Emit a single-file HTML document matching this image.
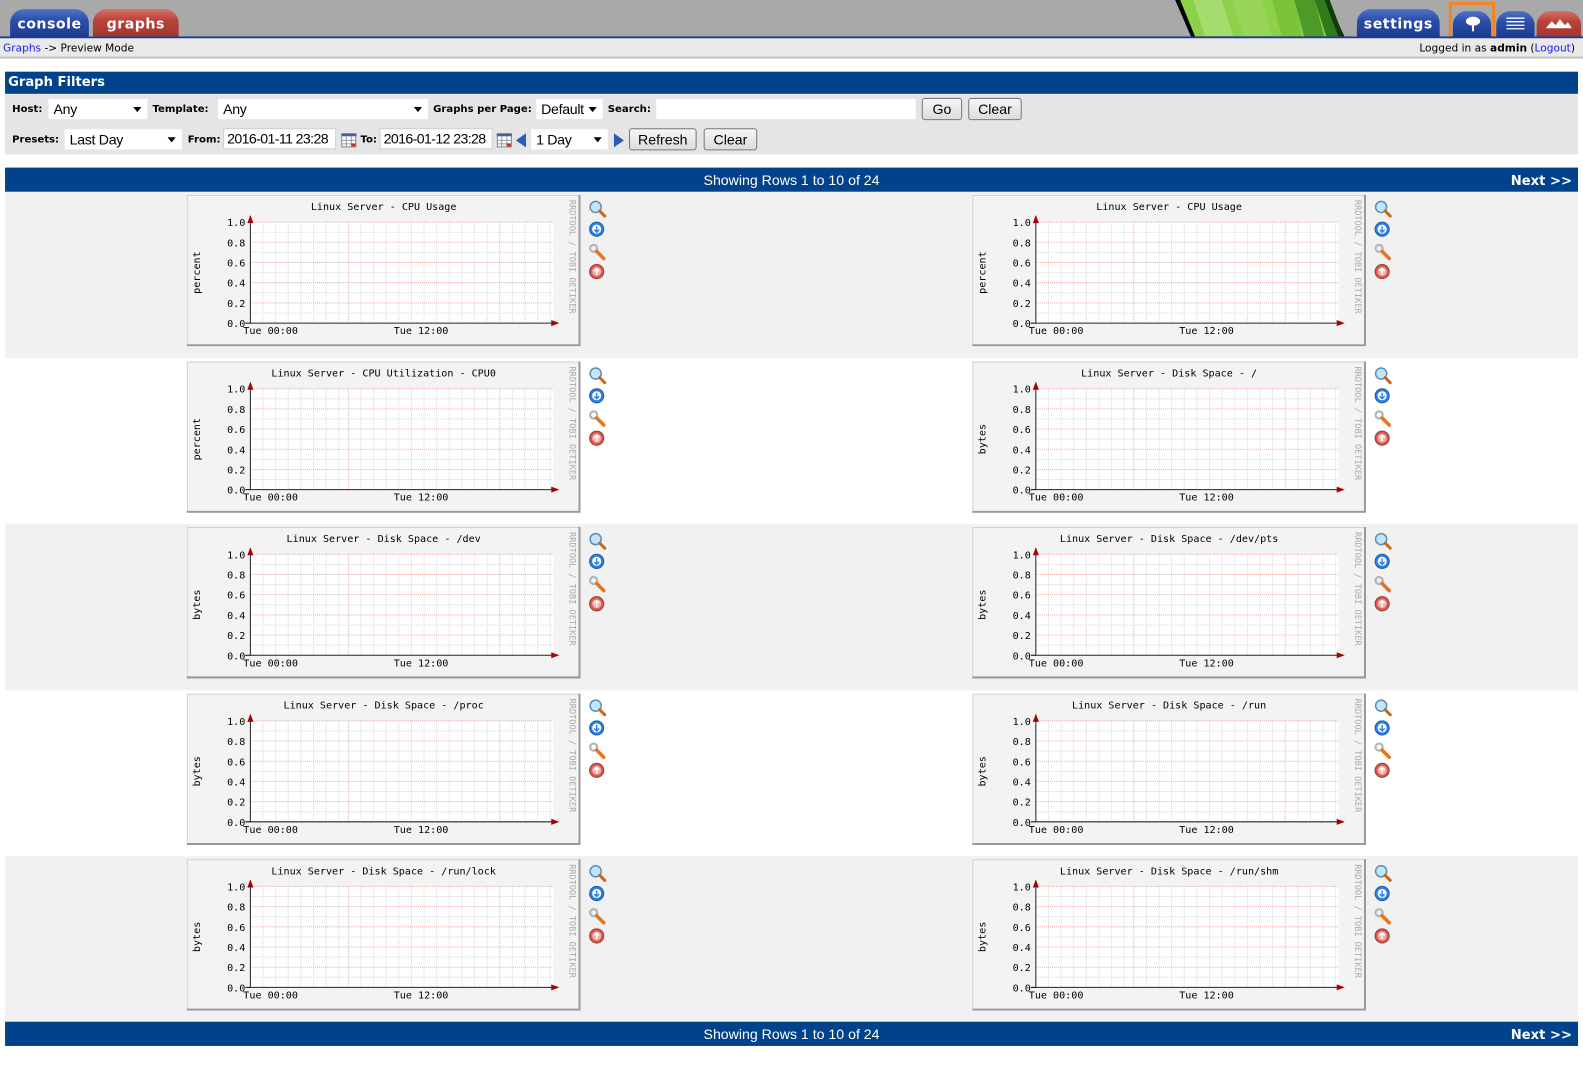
<!DOCTYPE html>
<html><head><meta charset="utf-8">
<style>
*{margin:0;padding:0;box-sizing:border-box}
html,body{width:1583px;height:1065px;overflow:hidden;background:#fff}
#w{position:absolute;left:0;top:0;width:1568px;height:1055px;transform:scale(1.0096);transform-origin:0 0;font-family:"DejaVu Sans",Verdana,sans-serif;font-size:11px;color:#000}
.a{position:absolute;white-space:nowrap}
.tab{position:absolute;top:9px;height:28px;border-radius:14px 14px 0 0;color:#fff;font-weight:bold;font-size:14px;text-align:center;line-height:30px;letter-spacing:0.5px}
.blue{background:linear-gradient(#4f73c8,#2a4ea8 40%,#1d3b8f)}
.red{background:linear-gradient(#d86f66,#b8433a 40%,#a3362e)}
.lbl{position:absolute;font-weight:bold;font-size:10px;white-space:nowrap}
.sel{position:absolute;background:#fff;height:20px;font-family:"Liberation Sans",Arial,sans-serif;font-size:14px;line-height:20px;padding-left:5px;white-space:nowrap;letter-spacing:-0.3px}
.sel:after{content:"";position:absolute;right:6px;top:8px;border-left:4px solid transparent;border-right:4px solid transparent;border-top:5px solid #000}
.inp{position:absolute;background:#fff;height:21px;border:1px solid #ccc;font-family:"Liberation Sans",Arial,sans-serif;font-size:14px;line-height:19px;padding-left:3px;white-space:nowrap;overflow:hidden;letter-spacing:-0.6px}
.btn{position:absolute;height:22px;border:1px solid #777;border-radius:3px;background:linear-gradient(#f6f6f6,#dcdcdc);font-family:"Liberation Sans",Arial,sans-serif;font-size:14px;line-height:20px;text-align:center}
.bar{position:absolute;left:5px;width:1558px;height:24px;background:#00438c;color:#fff;font-family:"Liberation Sans",Arial,sans-serif;font-size:14px;line-height:24px;text-align:center}
.bar b{position:absolute;right:6px;top:2px;line-height:24px;font-family:"DejaVu Sans",sans-serif;font-size:13px}
.row{position:absolute;left:5px;width:1558px;height:165px}
.g{position:absolute;width:390px;height:150px}
.ic{position:absolute;width:18px;height:84px}
svg text{font-family:"DejaVu Sans Mono","Liberation Mono",monospace}
</style></head><body><div id="w">
<svg width="0" height="0" style="position:absolute">
<defs>
<g id="grid">
<rect x="0" y="0" width="390" height="150" fill="#f3f3f3"/>
<path d="M0.5 149.5V0.5H389.5" stroke="#d0d0d0" fill="none"/>
<path d="M389 0V149H0" stroke="#999" stroke-width="2" fill="none"/>
<rect x="63" y="27" width="300" height="100" fill="#fff"/>
<g stroke="#d8d8d8" stroke-dasharray="1,1">
<path d="M63 37H363M63 57H363M63 77H363M63 97H363M63 117H363"/>
<path d="M75.5 27V127M88 27V127M100.5 27V127M113 27V127M125.5 27V127M138 27V127M150.5 27V127M172.5 27V127M185 27V127M197.5 27V127M210 27V127M222.5 27V127M235 27V127M247.5 27V127M260 27V127M272.5 27V127M285 27V127M297.5 27V127M322.5 27V127M335 27V127M347.5 27V127M360 27V127"/>
</g>
<g stroke="#eeaaaa" stroke-dasharray="1,1">
<path d="M63 27H363M63 47H363M63 67H363M63 87H363M63 107H363"/>
<path d="M160 27V127M310 27V127"/>
</g>
<path d="M63 21V127H366" stroke="#222" fill="none"/>
<path d="M60 28L63 20L66 28Z" fill="#a00"/>
<path d="M361 124L369 127L361 130Z" fill="#a00"/>
<g font-size="10" fill="#000" text-anchor="end">
<text x="58" y="31">1.0</text><text x="58" y="51">0.8</text><text x="58" y="71">0.6</text><text x="58" y="91">0.4</text><text x="58" y="111">0.2</text><text x="58" y="131">0.0</text>
</g>
<path d="M58 127H63" stroke="#000"/>
<g font-size="10" fill="#000"><text x="56" y="138">Tue 00:00</text><text x="205" y="138">Tue 12:00</text></g>
<text transform="translate(379,5) rotate(90)" font-size="8.5" fill="#aaa">RRDTOOL / TOBI OETIKER</text>
</g>
<g id="icons">
<circle cx="7" cy="7" r="5.5" fill="#bfe6ff" stroke="#5f8db5" stroke-width="1.5"/>
<path d="M11 11L16 16" stroke="#c8681e" stroke-width="3" stroke-linecap="round"/>
<circle cx="8" cy="29" r="7" fill="#2d7fe0" stroke="#1c5cb0"/>
<circle cx="8" cy="29" r="4.5" fill="#fff"/>
<path d="M8 26V32M5.5 29.5L8 32L10.5 29.5" stroke="#2d7fe0" stroke-width="1.4" fill="none"/>
<circle cx="5" cy="48" r="3.5" fill="none" stroke="#b5b5b5" stroke-width="2.2"/>
<path d="M8 51L15 58" stroke="#e8741e" stroke-width="3.5" stroke-linecap="round"/>
<circle cx="8" cy="71" r="7" fill="#d85a52" stroke="#a03a34"/>
<circle cx="8" cy="71" r="4.5" fill="#f3b0aa"/>
<path d="M8 74V68M5.5 70.5L8 68L10.5 70.5" stroke="#fff" stroke-width="1.4" fill="none"/>
</g>
</defs></svg>

<div class="a" style="left:0;top:0;width:1568px;height:36px;background:#a9a9a9"></div>
<svg class="a" style="left:1160px;top:0" width="180" height="37">
<polygon points="4,0 155,0 172,37 20,37" fill="#000"/>
<polygon points="9,0 152,0 166,37 24,37" fill="#8ed04a"/>
<polygon points="22,0 50,0 62,37 34,37" fill="#a6dc6e"/>
<polygon points="60,0 90,0 100,37 72,37" fill="#98d458"/>
<polygon points="100,0 122,0 130,37 110,37" fill="#7cc23a"/>
<polygon points="122,0 142,0 152,37 132,37" fill="#4c9a28"/>
<polygon points="142,0 152,0 166,37 154,37" fill="#2f7a1a"/>
<polygon points="152,0 157,0 171,37 166,37" fill="#0e3d08"/>
</svg>
<div class="tab blue" style="left:10px;width:78px">console</div>
<div class="tab red" style="left:92px;width:85px">graphs</div>
<div class="tab blue" style="left:1344px;width:82px">settings</div>
<div class="a" style="left:1435px;top:2px;width:46px;height:40px;border:3px solid #f7831e"></div>
<div class="tab blue" style="left:1439px;width:38px;top:11px;height:26px"></div>
<svg class="a" style="left:1450px;top:15px" width="18" height="18"><ellipse cx="9" cy="6" rx="7" ry="4.5" fill="#fff"/><rect x="8" y="9" width="2" height="7" fill="#fff"/></svg>
<div class="tab blue" style="left:1482px;width:38px;top:11px;height:26px"></div>
<svg class="a" style="left:1492px;top:17px" width="18" height="14"><path d="M0 1H18M0 4.5H18M0 8H18M0 11.5H18" stroke="#fff" stroke-width="1.3"/></svg>
<div class="tab red" style="left:1522px;width:44px;top:11px;height:26px"></div>
<svg class="a" style="left:1531px;top:18px" width="26" height="12"><path d="M0 10L6 3L10 7L14 1L19 7L22 4L26 10Z" fill="#fff"/></svg>
<div class="a" style="left:0;top:36px;width:1568px;height:2px;background:#1d3d8f"></div>
<div class="a" style="left:0;top:38px;width:1568px;height:20px;background:#e9e9e9;border-bottom:2px solid #c4c4c4"></div>
<div class="a" style="left:3px;top:42px;font-size:10.5px"><span style="color:#1a1aff">Graphs</span> -&gt; Preview Mode</div>
<div class="a" style="right:8px;top:42px;font-size:10.5px">Logged in as <b>admin</b> (<span style="color:#1a1aff">Logout</span>)</div>

<div class="a" style="left:5px;top:71px;width:1558px;height:22px;background:#00438c;color:#fff;font-weight:bold;font-size:13px;line-height:22px;padding-left:3px">Graph Filters</div>
<div class="a" style="left:5px;top:93px;width:1558px;height:60px;background:#e5e5e5"></div>
<div class="lbl" style="left:12px;top:103px">Host:</div>
<div class="sel" style="left:48px;top:98px;width:98px">Any</div>
<div class="lbl" style="left:151px;top:103px">Template:</div>
<div class="sel" style="left:216px;top:98px;width:208px">Any</div>
<div class="lbl" style="left:429px;top:103px">Graphs per Page:</div>
<div class="sel" style="left:531px;top:98px;width:66px">Default</div>
<div class="lbl" style="left:602px;top:103px">Search:</div>
<div class="a" style="left:650px;top:98px;width:257px;height:20px;background:#fff"></div>
<div class="btn" style="left:913px;top:97px;width:40px">Go</div>
<div class="btn" style="left:959px;top:97px;width:53px">Clear</div>

<div class="lbl" style="left:12px;top:133px">Presets:</div>
<div class="sel" style="left:64px;top:128px;width:116px">Last Day</div>
<div class="lbl" style="left:186px;top:133px">From:</div>
<div class="inp" style="left:221px;top:127px;width:112px">2016-01-11 23:28</div>
<svg class="a" style="left:338px;top:132px" width="15" height="14"><rect x="0.5" y="0.5" width="14" height="13" fill="#fff" stroke="#777"/><rect x="0" y="0" width="15" height="3" fill="#4a5fa0"/><path d="M5 3V14M10 3V14M0 7H15M0 10.5H15" stroke="#999"/><rect x="10" y="10" width="4" height="3" fill="#c03030"/></svg>
<div class="lbl" style="left:357px;top:133px">To:</div>
<div class="inp" style="left:376px;top:127px;width:112px">2016-01-12 23:28</div>
<svg class="a" style="left:492px;top:132px" width="15" height="14"><rect x="0.5" y="0.5" width="14" height="13" fill="#fff" stroke="#777"/><rect x="0" y="0" width="15" height="3" fill="#4a5fa0"/><path d="M5 3V14M10 3V14M0 7H15M0 10.5H15" stroke="#999"/><rect x="10" y="10" width="4" height="3" fill="#c03030"/></svg>
<svg class="a" style="left:511px;top:132px" width="10" height="14"><path d="M10 0V14L0 7Z" fill="#2a5cb8"/></svg>
<div class="sel" style="left:526px;top:128px;width:76px">1 Day</div>
<svg class="a" style="left:608px;top:132px" width="10" height="14"><path d="M0 0V14L10 7Z" fill="#2a5cb8"/></svg>
<div class="btn" style="left:623px;top:127px;width:67px">Refresh</div>
<div class="btn" style="left:697px;top:127px;width:53px">Clear</div>

<div class="bar" style="top:166px">Showing Rows 1 to 10 of 24<b>Next &gt;&gt;</b></div>

<div class="row" style="top:190px;background:#f1f1f1"></div>
<div class="row" style="top:354.5px;background:#fff"></div>
<div class="row" style="top:519px;background:#f1f1f1"></div>
<div class="row" style="top:683.5px;background:#fff"></div>
<div class="row" style="top:848px;background:#f1f1f1"></div>

<svg class="g" style="left:185px;top:193px"><use href="#grid"/><text x="195" y="15" font-size="10" text-anchor="middle">Linux Server - CPU Usage</text><text transform="translate(13,77) rotate(-90)" font-size="10" text-anchor="middle">percent</text></svg>
<svg class="ic" style="left:583px;top:198px"><use href="#icons"/></svg>
<svg class="g" style="left:963px;top:193px"><use href="#grid"/><text x="195" y="15" font-size="10" text-anchor="middle">Linux Server - CPU Usage</text><text transform="translate(13,77) rotate(-90)" font-size="10" text-anchor="middle">percent</text></svg>
<svg class="ic" style="left:1361px;top:198px"><use href="#icons"/></svg>
<svg class="g" style="left:185px;top:357.5px"><use href="#grid"/><text x="195" y="15" font-size="10" text-anchor="middle">Linux Server - CPU Utilization - CPU0</text><text transform="translate(13,77) rotate(-90)" font-size="10" text-anchor="middle">percent</text></svg>
<svg class="ic" style="left:583px;top:362.5px"><use href="#icons"/></svg>
<svg class="g" style="left:963px;top:357.5px"><use href="#grid"/><text x="195" y="15" font-size="10" text-anchor="middle">Linux Server - Disk Space - /</text><text transform="translate(13,77) rotate(-90)" font-size="10" text-anchor="middle">bytes</text></svg>
<svg class="ic" style="left:1361px;top:362.5px"><use href="#icons"/></svg>
<svg class="g" style="left:185px;top:522px"><use href="#grid"/><text x="195" y="15" font-size="10" text-anchor="middle">Linux Server - Disk Space - /dev</text><text transform="translate(13,77) rotate(-90)" font-size="10" text-anchor="middle">bytes</text></svg>
<svg class="ic" style="left:583px;top:527px"><use href="#icons"/></svg>
<svg class="g" style="left:963px;top:522px"><use href="#grid"/><text x="195" y="15" font-size="10" text-anchor="middle">Linux Server - Disk Space - /dev/pts</text><text transform="translate(13,77) rotate(-90)" font-size="10" text-anchor="middle">bytes</text></svg>
<svg class="ic" style="left:1361px;top:527px"><use href="#icons"/></svg>
<svg class="g" style="left:185px;top:686.5px"><use href="#grid"/><text x="195" y="15" font-size="10" text-anchor="middle">Linux Server - Disk Space - /proc</text><text transform="translate(13,77) rotate(-90)" font-size="10" text-anchor="middle">bytes</text></svg>
<svg class="ic" style="left:583px;top:691.5px"><use href="#icons"/></svg>
<svg class="g" style="left:963px;top:686.5px"><use href="#grid"/><text x="195" y="15" font-size="10" text-anchor="middle">Linux Server - Disk Space - /run</text><text transform="translate(13,77) rotate(-90)" font-size="10" text-anchor="middle">bytes</text></svg>
<svg class="ic" style="left:1361px;top:691.5px"><use href="#icons"/></svg>
<svg class="g" style="left:185px;top:851px"><use href="#grid"/><text x="195" y="15" font-size="10" text-anchor="middle">Linux Server - Disk Space - /run/lock</text><text transform="translate(13,77) rotate(-90)" font-size="10" text-anchor="middle">bytes</text></svg>
<svg class="ic" style="left:583px;top:856px"><use href="#icons"/></svg>
<svg class="g" style="left:963px;top:851px"><use href="#grid"/><text x="195" y="15" font-size="10" text-anchor="middle">Linux Server - Disk Space - /run/shm</text><text transform="translate(13,77) rotate(-90)" font-size="10" text-anchor="middle">bytes</text></svg>
<svg class="ic" style="left:1361px;top:856px"><use href="#icons"/></svg>

<div class="bar" style="top:1012px">Showing Rows 1 to 10 of 24<b>Next &gt;&gt;</b></div>
</div></body></html>
